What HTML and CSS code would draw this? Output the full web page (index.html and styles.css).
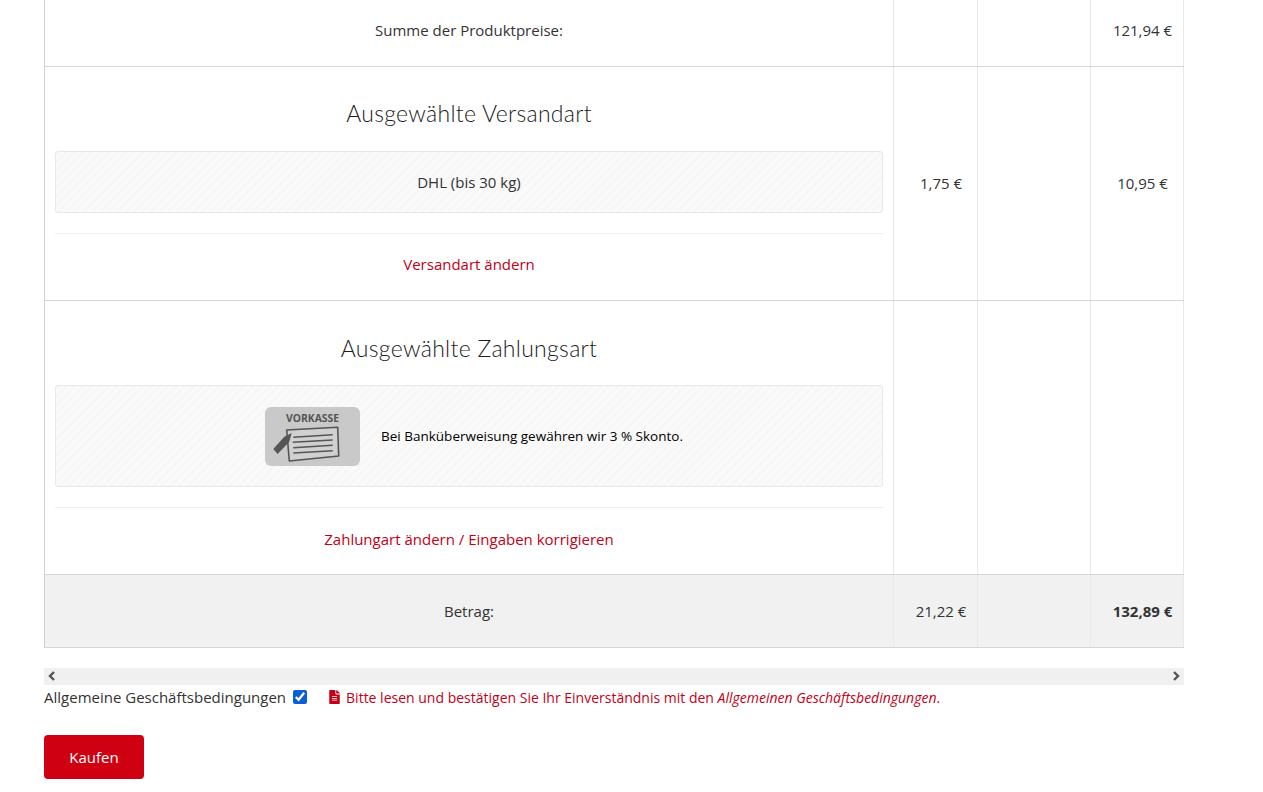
FILE: index.html
```html
<!DOCTYPE html>
<html lang="de">

<head>
    <meta charset="UTF-8">
    <meta name="viewport" content="width=device-width, initial-scale=1.0">
    <title>Kasse</title>
    <link rel="stylesheet" href="styles.css">
</head>

<body>
    <table class="order-table">
        <colgroup>
            <col class="col-main">
            <col class="col-tax">
            <col class="col-empty">
            <col class="col-total">
        </colgroup>
        <tr class="row-sum">
            <td class="label">Summe der Produktpreise:</td>
            <td></td>
            <td></td>
            <td class="amount">121,94 €</td>
        </tr>
        <tr>
            <td>
                <h3>Ausgewählte Versandart</h3>
                <div class="well">DHL (bis 30 kg)</div>
                <hr>
                <a class="change-link" href="#">Versandart ändern</a>
            </td>
            <td class="amount">1,75 €</td>
            <td></td>
            <td class="amount">10,95 €</td>
        </tr>
        <tr>
            <td>
                <h3 class="heading-payment">Ausgewählte Zahlungsart</h3>
                <div class="well well-payment">
                    <svg class="pay-logo" width="95" height="59" viewBox="0 0 95 59">
                        <rect width="95" height="59" rx="6" fill="#c9c9c9"/>
                        <text x="21" y="15" font-family="Open Sans" font-weight="700" font-size="10.5" textLength="53" lengthAdjust="spacingAndGlyphs" fill="#555">VORKASSE</text>
                        <polygon points="21.7,23 72.7,20.3 73.7,49 24.3,54" fill="#d0d0d0" stroke="#555" stroke-width="1.6" stroke-linejoin="round"/>
                        <path d="M28.3 30.3L67.7 27.7M27.7 35.3L67.7 33M28.3 40.7L67.7 38.3M28.3 46L67.7 43.7" stroke="#555" stroke-width="1.6" fill="none"/>
                        <polygon points="26.7,26 19.3,29.7 8.3,42 12.6,47 24.3,34.7" fill="#555"/>
                    </svg>
                    <span>Bei Banküberweisung gewähren wir 3 % Skonto.</span>
                </div>
                <hr>
                <a class="change-link" href="#">Zahlungart ändern / Eingaben korrigieren</a>
            </td>
            <td></td>
            <td></td>
            <td></td>
        </tr>
        <tr class="row-total">
            <td class="label">Betrag:</td>
            <td class="amount">21,22 €</td>
            <td></td>
            <td class="amount"><strong>132,89 €</strong></td>
        </tr>
    </table>

    <div class="scroll-bar">
        <svg width="8" height="10" viewBox="0 0 8 10"><path d="M6 1L2 5l4 4" fill="none" stroke="#555" stroke-width="2.4"/></svg>
        <svg width="8" height="10" viewBox="0 0 8 10"><path d="M2 1l4 4-4 4" fill="none" stroke="#555" stroke-width="2.4"/></svg>
    </div>

    <div class="terms">
        <label for="agb">Allgemeine Geschäftsbedingungen</label>
        <input type="checkbox" id="agb" checked>
        <p class="terms-note">
            <svg width="11" height="14" viewBox="0 0 384 512"><path fill="#c20018" d="M224 136V0H24C10.7 0 0 10.7 0 24v464c0 13.3 10.7 24 24 24h336c13.3 0 24-10.7 24-24V160H248c-13.2 0-24-10.8-24-24zm64 236c0 6.6-5.4 12-12 12H108c-6.6 0-12-5.4-12-12v-8c0-6.6 5.4-12 12-12h168c6.6 0 12 5.4 12 12v8zm0-64c0 6.6-5.4 12-12 12H108c-6.6 0-12-5.4-12-12v-8c0-6.6 5.4-12 12-12h168c6.6 0 12 5.4 12 12v8zm0-72v8c0 6.6-5.4 12-12 12H108c-6.6 0-12-5.4-12-12v-8c0-6.6 5.4-12 12-12h168c6.6 0 12 5.4 12 12zm96-114.1v6.1H256V0h6.1c6.4 0 12.5 2.5 17 7l97.9 98c4.5 4.5 7 10.6 7 16.9z"/></svg>
            <span>Bitte lesen und bestätigen Sie Ihr Einverständnis mit den <em>Allgemeinen Geschäftsbedingungen</em>.</span>
        </p>
    </div>

    <button class="buy-button" type="submit">Kaufen</button>
</body>

</html>
```

FILE: styles.css
```css
body {
    margin: 0;
    padding: 0 0 13px 44px;
    font-family: "Open Sans", sans-serif;
    font-size: 15px;
    line-height: 21px;
    color: #333;
    background: #fff;
}

.order-table {
    width: 1139px;
    table-layout: fixed;
    border-collapse: collapse;
}

.col-main {
    width: 849px;
}

.col-tax {
    width: 84px;
}

.col-empty {
    width: 113px;
}

.col-total {
    width: 93px;
}

.order-table td {
    padding: 10px;
    text-align: center;
    vertical-align: middle;
    border-left: 1px solid #e8e8e8;
    border-right: 1px solid #e8e8e8;
    border-bottom: 1px solid #d6d6d6;
}

.order-table td:first-child {
    border-left-color: #d0d0d0;
}

.order-table .amount {
    padding-left: 21px;
    white-space: nowrap;
}

.order-table .row-sum td {
    height: 66px;
    box-sizing: border-box;
    padding-bottom: 15px;
}

.order-table .row-total td {
    height: 73px;
    box-sizing: border-box;
    padding-top: 11px;
    padding-bottom: 9px;
    background: #f1f1f1;
}

h3 {
    margin: 23px 0 25px;
    font-family: Lato, sans-serif;
    font-size: 23px;
    font-weight: 300;
    letter-spacing: 0.3px;
    line-height: 26px;
    color: #1c1c1c;
}

.heading-payment {
    margin: 24px 0 24px;
}

.well {
    padding: 20px 20px 19px;
    border: 1px solid #e8e8e8;
    border-radius: 3px;
    background: repeating-linear-gradient(135deg, #f7f7f7, #f7f7f7 3px, #fafafa 3px, #fafafa 6px);
}

.well-payment {
    display: flex;
    align-items: center;
    justify-content: center;
    gap: 21px;
    padding: 21px 0 20px 10px;
    color: #000;
    font-size: 13.5px;
}

hr {
    height: 1px;
    margin: 20px 0;
    border: 0;
    background: #eee;
}

.change-link {
    display: block;
    margin-bottom: 15px;
    color: #c20018;
    text-decoration: none;
}

.heading-payment ~ .change-link {
    margin-top: 21px;
    margin-bottom: 14px;
}

.scroll-bar {
    display: flex;
    align-items: center;
    justify-content: space-between;
    box-sizing: border-box;
    width: 1140px;
    height: 17px;
    margin-top: 20px;
    padding: 0 4px;
    background: #f0f0f0;
}

.terms {
    display: flex;
    align-items: center;
    height: 25px;
    margin-bottom: 25px;
}

.terms label {
    font-size: 15px;
}

.terms input {
    width: 14px;
    height: 14px;
    margin: 0 0 0 7px;
    accent-color: #0b5ed7;
}

.terms-note {
    display: flex;
    align-items: center;
    gap: 6px;
    margin: 0 0 0 22px;
    color: #c20018;
    font-size: 14px;
}

.buy-button {
    display: block;
    width: 100px;
    height: 44px;
    border: 0;
    border-radius: 4px;
    background: #cf0012;
    color: #fff;
    font-family: "Open Sans", sans-serif;
    font-size: 15px;
}
```
